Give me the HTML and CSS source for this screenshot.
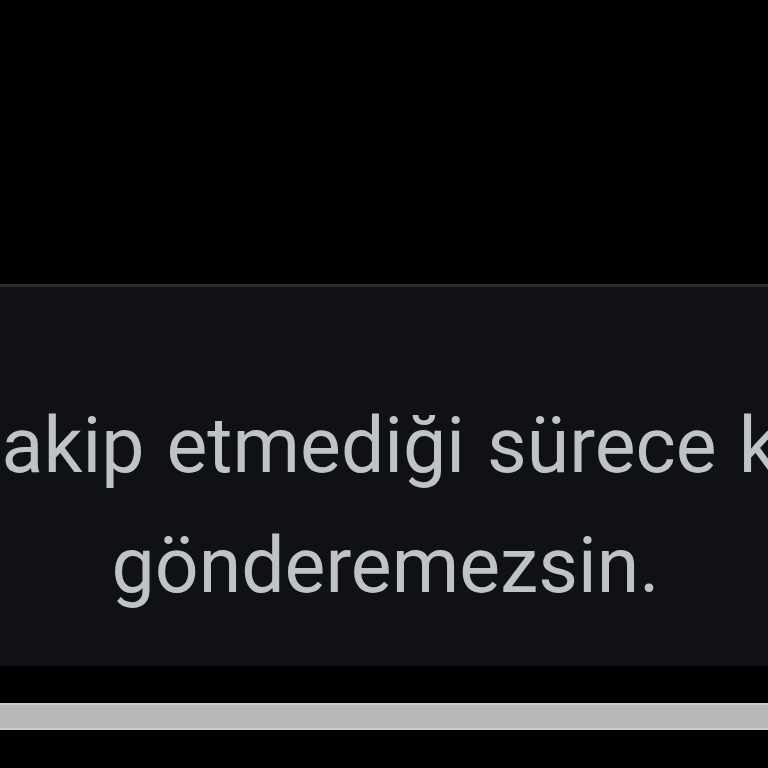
FILE: index.html
```html
<!DOCTYPE html>
<html lang="tr">
<head>
    <meta charset="UTF-8">
    <meta name="viewport" content="width=device-width, initial-scale=1.0">
    <title>Mesaj</title>
    <link rel="stylesheet" href="styles.css">
</head>
<body>
    <!-- Top empty area -->
    <div class="top-area"></div>

    <!-- Notice panel -->
    <div class="notice">
        <p class="notice-line notice-line-first">seni takip etmediği sürece kimse</p>
        <p class="notice-line">gönderemezsin.</p>
    </div>

    <!-- Bottom bar -->
    <div class="bottom-gap"></div>
    <div class="home-bar"></div>
</body>
</html>
```

FILE: styles.css
```css
/* Reset and base styles */
* {
    margin: 0;
    padding: 0;
    box-sizing: border-box;
}

body {
    background-color: #000000;
    color: #bfc3c7;
    font-family: Roboto, "Noto Sans", sans-serif;
    width: 768px;
    height: 768px;
    overflow: hidden;
}

.top-area {
    height: 284px;
}

/* Notice panel */
.notice {
    height: 382px;
    background-color: #0f1115;
    border-top: 3px solid #2b2d31;
    padding-top: 99px;
    padding-left: 3px;
    display: flex;
    flex-direction: column;
    align-items: center;
    overflow: hidden;
}

.notice-line {
    font-size: 77px;
    line-height: 120px;
    white-space: nowrap;
    flex-shrink: 0;
}

.notice-line-first {
    word-spacing: 3px;
    margin-right: 14px;
}

/* Bottom bar */
.bottom-gap {
    height: 37px;
}

.home-bar {
    height: 27px;
    background-color: #b8b8b8;
    border-top: 2px solid #cccccc;
    border-bottom: 2px solid #cccccc;
}
```
